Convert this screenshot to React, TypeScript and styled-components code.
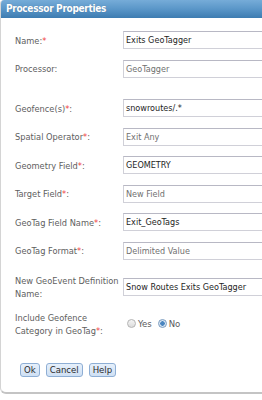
import { FC } from "react";
import styled, { createGlobalStyle } from "styled-components";

const GlobalStyle = createGlobalStyle`
  html, body {
    margin: 0;
    padding: 0;
    background: #ffffff;
    overflow: hidden;
  }
  body {
    font-family: Tahoma, "DejaVu Sans Condensed", "DejaVu Sans", sans-serif;
  }
`;

type Field = {
  label: string;
  required?: boolean;
  value: string;
  muted?: boolean;
  spaceBefore?: number;
};

const fields: Field[] = [
  { label: "Name:", required: true, value: "Exits GeoTagger" },
  { label: "Processor:", value: "GeoTagger", muted: true },
  { label: "Geofence(s)", required: true, value: "snowroutes/.*", spaceBefore: 11 },
  { label: "Spatial Operator", required: true, value: "Exit Any", muted: true },
  { label: "Geometry Field", required: true, value: "GEOMETRY" },
  { label: "Target Field", required: true, value: "New Field", muted: true },
  { label: "GeoTag Field Name", required: true, value: "Exit_GeoTags" },
  { label: "GeoTag Format", required: true, value: "Delimited Value", muted: true },
  { label: "New GeoEvent Definition Name:", value: "Snow Routes Exits GeoTagger", spaceBefore: 4 },
];

// "Name:" style labels carry the star after the colon, the rest before it
const LabelText: FC<{ field: Field }> = ({ field }) => {
  if (field.label.endsWith(":")) {
    return (
      <>
        {field.label}
        {field.required && <Star>*</Star>}
      </>
    );
  }
  return (
    <>
      {field.label}
      {field.required && <Star>*</Star>}:
    </>
  );
};

const App: FC = () => {
  return (
    <>
      <GlobalStyle />
      <Dialog>
        <Header>Processor Properties</Header>
        <Body>
          {fields.map((f) => (
            <Row key={f.label} spaceBefore={f.spaceBefore ?? 0}>
              <Label>
                <LabelText field={f} />
              </Label>
              <Input muted={!!f.muted}>{f.value}</Input>
            </Row>
          ))}
          <Row spaceBefore={0}>
            <Label>
              Include Geofence
              <br />
              Category in GeoTag<Star>*</Star>:
            </Label>
            <RadioGroup>
              <Radio checked={false} />
              <RadioLabel>Yes</RadioLabel>
              <Radio checked />
              <RadioLabel>No</RadioLabel>
            </RadioGroup>
          </Row>
          <Buttons>
            <Button>Ok</Button>
            <Button>Cancel</Button>
            <Button>Help</Button>
          </Buttons>
        </Body>
      </Dialog>
    </>
  );
};

export default App;

const Dialog = styled.div`
  width: 320px;
  height: 394px;
  box-sizing: border-box;
  border-left: 1px solid #d4d4d4;
  border-bottom: 2px solid #c4c4c4;
  border-radius: 4px 0 0 6px;
  background: #ffffff;
  overflow: hidden;
`;

const Header = styled.div`
  height: 18px;
  line-height: 17px;
  padding-left: 5px;
  background: linear-gradient(#76acd8, #5a96c8 50%, #3d7cb1);
  color: #ffffff;
  font-weight: bold;
  font-size: 10px;
  letter-spacing: -0.3px;
  text-shadow: 0 0 1px rgba(0, 0, 0, 0.25);
`;

const Body = styled.div`
  display: flex;
  flex-direction: column;
  gap: 10.5px;
  padding: 13px 0 0 14px;
`;

const Row = styled.div<{ spaceBefore: number }>`
  display: grid;
  grid-template-columns: 108px 1fr;
  align-items: center;
  min-height: 18px;
  margin-top: ${({ spaceBefore }) => spaceBefore}px;
`;

const Label = styled.div`
  color: #5e5e5e;
  font-size: 9.2px;
  line-height: 13px;
  padding-right: 1px;
`;

const Star = styled.span`
  color: #f03c3c;
`;

const Input = styled.div<{ muted: boolean }>`
  box-sizing: border-box;
  height: 18px;
  line-height: 16px;
  padding-left: 2px;
  border: 1px solid #d0d0d8;
  border-top-color: #b8b8c4;
  font-size: 9px;
  color: ${({ muted }) => (muted ? "#707070" : "#1e1e1e")};
  white-space: nowrap;
`;

const RadioGroup = styled.div`
  display: flex;
  align-items: center;
  padding-left: 4px;
`;

const Radio = styled.span<{ checked: boolean }>`
  box-sizing: border-box;
  width: 9px;
  height: 9px;
  border-radius: 50%;
  border: 1px solid ${({ checked }) => (checked ? "#7a9cc0" : "#b4b4b4")};
  background: ${({ checked }) =>
    checked
      ? "radial-gradient(circle, #4a86c0 0 2px, #d8e6f4 2.5px)"
      : "linear-gradient(#f4f4f4, #dcdcdc)"};
  margin-right: 2px;
`;

const RadioLabel = styled.span`
  font-size: 9.5px;
  color: #5a5a5a;
  margin-right: 6px;
`;

const Buttons = styled.div`
  display: flex;
  gap: 6px;
  margin-top: 16px;
  padding-left: 5px;
`;

const Button = styled.button`
  box-sizing: border-box;
  height: 14px;
  padding: 0 3px;
  border: 1px solid #8eaed4;
  border-radius: 3px;
  background: linear-gradient(#e6f0fb, #cfe0f4);
  color: #2a2a2a;
  font-family: inherit;
  font-size: 9.5px;
  line-height: 12px;
`;
